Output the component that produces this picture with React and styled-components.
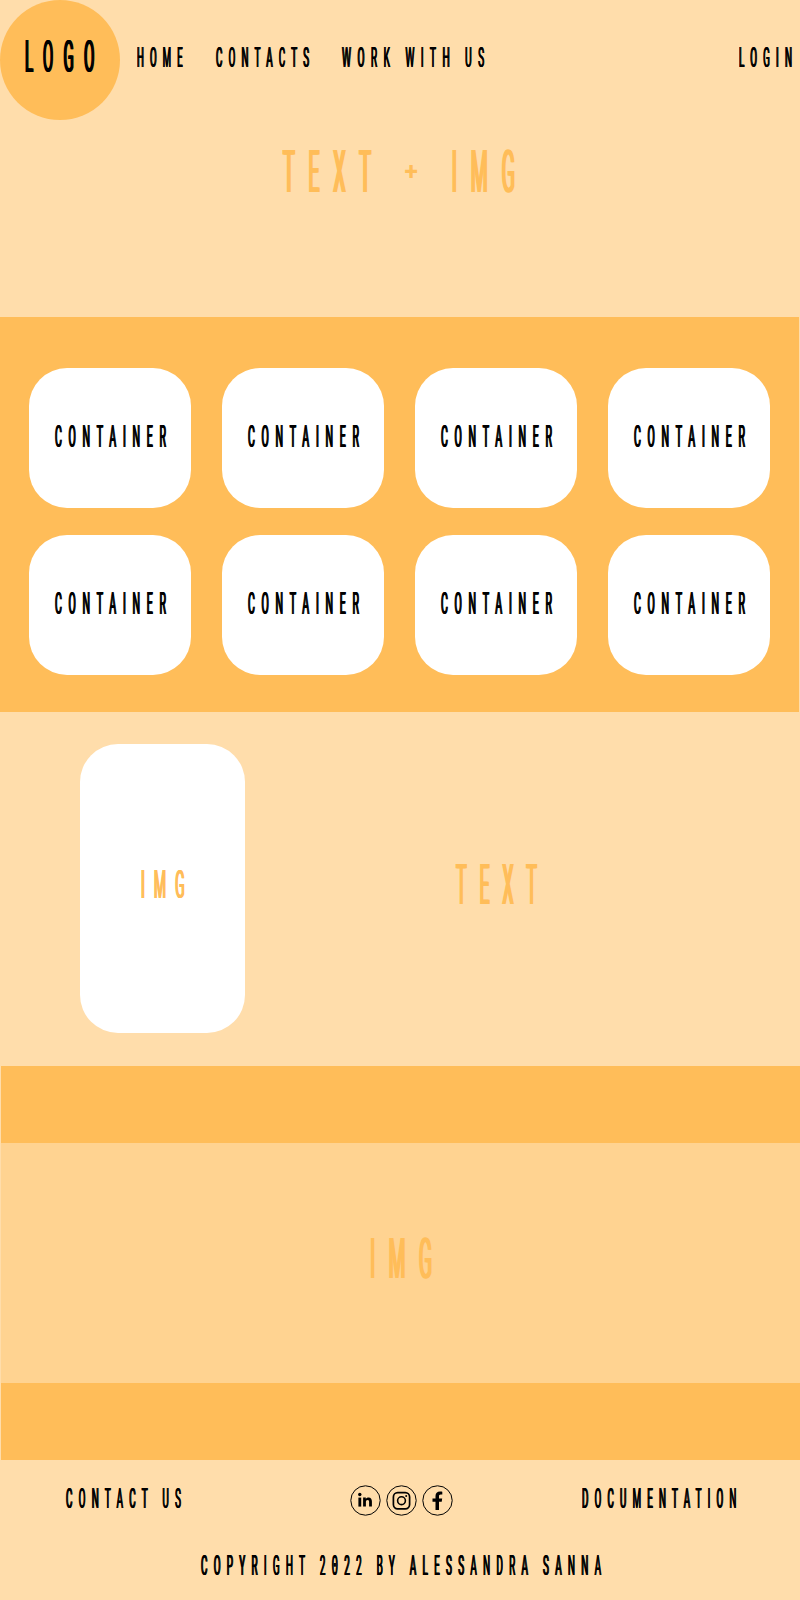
import React, { useLayoutEffect, useRef, useState } from "react";
import styled, { createGlobalStyle } from "styled-components";

const LIGHT = "#ffddab";
const ORANGE = "#ffbd59";
const BAND = "#ffd391";

const GlobalStyle = createGlobalStyle`
  * { box-sizing: border-box; }
  body { margin: 0; background: ${LIGHT}; font-family: Roboto, "Liberation Sans", sans-serif; }
`;

const Page = styled.div`
  width: 800px;
  height: 1600px;
  display: flex;
  flex-direction: column;
  overflow: hidden;
  background: ${LIGHT};
`;

const LabelBox = styled.span`
  display: block;
  flex: none;
  width: ${(p) => p.$width}px;
  height: ${(p) => p.$size}px;
  line-height: ${(p) => p.$size}px;
  font-size: ${(p) => p.$size}px;
  color: ${(p) => p.$color || "#000"};
`;

const LabelText = styled.span`
  display: inline-block;
  vertical-align: top;
  white-space: pre;
  transform-origin: 0 50%;
  letter-spacing: ${(p) => p.$spacing}em;
  margin-right: -2000px;
  text-shadow: 0.045em 0 0 currentColor, -0.045em 0 0 currentColor;
`;

const Plus = styled.span`
  display: inline-block;
  font-size: 0.43em;
  font-weight: 700;
  letter-spacing: 0;
  line-height: 1;
  vertical-align: 0.46em;
  margin: 0 2.35em 0 0.7em;
  transform: scaleX(2.9);
  text-shadow: none;
`;

const DottedZero = styled.span`
  font-family: "Liberation Mono", monospace;
  font-size: 1.06em;
  line-height: 0;
`;

/* Tall condensed lettering, squeezed so the word fills the given width. */
function Label({ width, size, spacing = 0.64, color, children }) {
  const ref = useRef(null);
  const [scale, setScale] = useState(0.38);
  useLayoutEffect(() => {
    const natural = ref.current.offsetWidth - spacing * size;
    setScale(width / natural);
  }, [width, size, spacing]);
  return (
    <LabelBox $width={width} $size={size} $color={color}>
      <LabelText ref={ref} $spacing={spacing} style={{ transform: `scaleX(${scale})` }}>
        {children}
      </LabelText>
    </LabelBox>
  );
}

const Header = styled.header`
  flex: none;
  height: 120px;
  display: flex;
  align-items: center;
  padding-right: 8.5px;
`;

const Logo = styled.div`
  width: 120px;
  height: 120px;
  border-radius: 50%;
  background: ${ORANGE};
  display: flex;
  align-items: center;
  justify-content: center;
  padding: 0 1px 7px 0;
`;

const Nav = styled.nav`
  flex: 1;
  display: flex;
  gap: 33.5px;
  padding: 0 0 5px 16.5px;
`;

const Login = styled.div`
  padding-bottom: 5px;
`;

const Hero = styled.section`
  flex: none;
  height: 197px;
  display: flex;
  justify-content: center;
  padding: 22px 2px 0 0;
`;

const Grid = styled.section`
  flex: none;
  height: 395px;
  margin-right: 1px;
  padding: 51px 0 0 29px;
  background: ${ORANGE};
  display: grid;
  grid-template-columns: repeat(4, 162px);
  grid-auto-rows: 140px;
  align-content: start;
  gap: 27px 31.1px;
`;

const Card = styled.div`
  border-radius: 38px;
  background: #fff;
  display: flex;
  align-items: center;
  justify-content: center;
  padding: 0 0 1px 0;
`;

const Feature = styled.section`
  flex: none;
  height: 354px;
  display: flex;
  align-items: flex-start;
  padding: 32px 0 0 80px;
`;

const Picture = styled.div`
  width: 165px;
  height: 289px;
  border-radius: 38px;
  background: #fff;
  display: flex;
  align-items: center;
  justify-content: center;
  padding-bottom: 6px;
`;

const Copy = styled.div`
  flex: 1;
  height: 289px;
  display: flex;
  align-items: center;
  padding: 0 0 6px 211px;
`;

const Banner = styled.section`
  flex: none;
  height: 394px;
  margin-left: 1px;
  padding: 77px 0;
  background: ${ORANGE};
`;

const BannerImage = styled.div`
  height: 240px;
  background: ${BAND};
  display: flex;
  align-items: center;
  justify-content: center;
  padding: 0 0 7px 1px;
`;

const Footer = styled.footer`
  flex: 1;
  display: flex;
  flex-direction: column;
  align-items: center;
  padding-top: 25px;
`;

const FooterRow = styled.div`
  width: 100%;
  height: 32px;
  display: flex;
  justify-content: space-between;
  padding: 0 64px 0 66px;
`;

const Social = styled.div`
  display: flex;
  gap: 5px;
  padding: 0 0 0 40px;
`;

const Copyright = styled.div`
  padding: 35px 0 0 2px;
`;

const Icon = styled.svg`
  width: 31px;
  height: 31px;
  display: block;
`;

function Badge({ children }) {
  return (
    <Icon viewBox="0 0 31 31">
      <circle cx="15.5" cy="15.5" r="14.7" fill="none" stroke="#000" strokeWidth="1" />
      {children}
    </Icon>
  );
}

const cards = Array.from({ length: 8 }, (_, i) => i);

export default function App() {
  return (
    <Page>
      <GlobalStyle />
      <Header>
        <Logo>
          <Label width={69.5} size={44} spacing={0.68}>LOGO</Label>
        </Logo>
        <Nav>
          <Label width={45.5} size={28}>HOME</Label>
          <Label width={93} size={28}>CONTACTS</Label>
          <Label width={142} size={28}>WORK WITH US</Label>
        </Nav>
        <Login>
          <Label width={53} size={28}>LOGIN</Label>
        </Login>
      </Header>
      <Hero>
        <Label width={232} size={59} spacing={0.7} color={ORANGE}>TEXT <Plus>+</Plus> IMG</Label>
      </Hero>
      <Grid>
        {cards.map((i) => (
          <Card key={i}>
            <Label width={111} size={30.5}>CONTAINER</Label>
          </Card>
        ))}
      </Grid>
      <Feature>
        <Picture>
          <Label width={43.5} size={38.5} spacing={0.65} color={ORANGE}>IMG</Label>
        </Picture>
        <Copy>
          <Label width={81} size={55} spacing={0.72} color={ORANGE}>TEXT</Label>
        </Copy>
      </Feature>
      <Banner>
        <BannerImage>
          <Label width={62} size={55} spacing={0.7} color={ORANGE}>IMG</Label>
        </BannerImage>
      </Banner>
      <Footer>
        <FooterRow>
          <Label width={115} size={28}>CONTACT US</Label>
          <Social>
            <Badge>
              <rect x="8.4" y="12.6" width="2.8" height="9" />
              <circle cx="9.8" cy="9.5" r="1.7" />
              <path d="M13.1 12.6h2.7v1.3c.6-1 1.5-1.5 2.7-1.5 2.6 0 3.4 1.6 3.4 4.2v5h-2.8v-4.5c0-1.3-.3-2.2-1.5-2.2s-1.7.9-1.7 2.2v4.5h-2.8z" />
            </Badge>
            <Badge>
              <rect x="7.4" y="7.6" width="16.2" height="16.2" rx="4.3" fill="none" stroke="#000" strokeWidth="1.7" />
              <circle cx="15.5" cy="15.7" r="3.9" fill="none" stroke="#000" strokeWidth="1.6" />
              <circle cx="20.2" cy="11" r="1" />
            </Badge>
            <Badge>
              <path d="M13.5 25v-8.2h-3v-3.4h3v-2.3c0-3 1.7-4.6 4.5-4.6 1.2 0 2.3.2 2.3.2v2.8h-1.5c-1.4 0-1.8.8-1.8 1.7v2.2h3.2l-.5 3.4h-2.7V25z" />
            </Badge>
          </Social>
          <Label width={154.5} size={28}>DOCUMENTATION</Label>
        </FooterRow>
        <Copyright>
          <Label width={400} size={28}>COPYRIGHT 2<DottedZero>0</DottedZero>22 BY ALESSANDRA SANNA</Label>
        </Copyright>
      </Footer>
    </Page>
  );
}
